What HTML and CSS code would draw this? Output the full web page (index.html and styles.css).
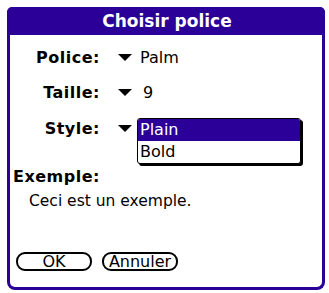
FILE: index.html
```html
<!DOCTYPE html>
<html>
<head>
<meta charset="utf-8">
<link rel="stylesheet" href="styles.css">
</head>
<body>
<div class="dialog">
  <div class="titlebar">Choisir police</div>
  <div class="content">
    <div class="row">
      <span class="label">Police:</span>
      <span class="trigger"><svg class="tri" width="14" height="8" viewBox="0 0 14 8"><polygon points="0,0 14,0 7,7" fill="#000"/></svg><span class="value">Palm</span></span>
    </div>
    <div class="row">
      <span class="label">Taille:</span>
      <span class="trigger"><svg class="tri" width="14" height="8" viewBox="0 0 14 8"><polygon points="0,0 14,0 7,7" fill="#000"/></svg><span class="value num">9</span></span>
    </div>
    <div class="row style-row">
      <span class="label">Style:</span>
      <span class="trigger"><svg class="tri" width="14" height="8" viewBox="0 0 14 8"><polygon points="0,0 14,0 7,7" fill="#000"/></svg></span>
      <div class="list">
        <div class="item selected">Plain</div>
        <div class="item">Bold</div>
      </div>
    </div>
    <div class="example-label">Exemple:</div>
    <div class="example-text">Ceci est un exemple.</div>
    <div class="buttons">
      <div class="btn">OK</div>
      <div class="btn">Annuler</div>
    </div>
  </div>
</div>
</body>
</html>
```
FILE: styles.css
```css
html, body {
  margin: 0;
  padding: 0;
  background: #ffffff;
}
body {
  font-family: "DejaVu Sans", sans-serif;
  color: #000;
}
.dialog {
  margin: 7px 0 0 7px;
  width: 318px;
  height: 283px;
  box-sizing: border-box;
  border: 3px solid #2a0099;
  border-top: 0;
  border-radius: 6px 6px 8px 8px;
  display: flex;
  flex-direction: column;
}
.titlebar {
  margin: 0 -3px;
  height: 28px;
  background: #2a0099;
  border-radius: 5px 5px 0 0;
  color: #fff;
  font-weight: bold;
  font-size: 17px;
  line-height: 28px;
  text-align: center;
  padding-left: 2px;
}
.content {
  display: flex;
  flex-direction: column;
  padding-top: 13px;
  flex: 1;
}
.row {
  display: flex;
  align-items: center;
  height: 20px;
  line-height: 20px;
  margin-bottom: 15px;
}
.style-row {
  position: relative;
  margin-top: 1px;
  margin-bottom: 28px;
}
.label {
  width: 90px;
  text-align: right;
  font-weight: bold;
  font-size: 16px;
  letter-spacing: 0.5px;
  flex: none;
}
.trigger {
  display: flex;
  align-items: center;
  margin-left: 18px;
  font-size: 16px;
}
.tri {
  display: block;
}
.value {
  margin-left: 8px;
}
.value.num {
  margin-left: 11px;
}
.list {
  position: absolute;
  left: 127px;
  top: -1px;
  width: 164px;
  box-sizing: border-box;
  border: 1px solid #000;
  border-radius: 3px;
  box-shadow: 2px 2px 0 #000;
  background: #fff;
  overflow: hidden;
  font-size: 16px;
}
.item {
  height: 22px;
  line-height: 22px;
  padding-left: 2px;
}
.item.selected {
  background: #2a0099;
  color: #fff;
}
.example-label {
  font-weight: bold;
  font-size: 16px;
  letter-spacing: 0.5px;
  line-height: 20px;
  padding-left: 3px;
}
.example-text {
  font-size: 15.5px;
  line-height: 20px;
  margin-top: 4px;
  padding-left: 19px;
}
.buttons {
  display: flex;
  gap: 10px;
  margin-top: 41px;
  padding-left: 6px;
}
.btn {
  width: 76px;
  height: 19px;
  box-sizing: border-box;
  border: 2px solid #000;
  border-radius: 9px;
  font-size: 16px;
  line-height: 15px;
  text-align: center;
}
```
